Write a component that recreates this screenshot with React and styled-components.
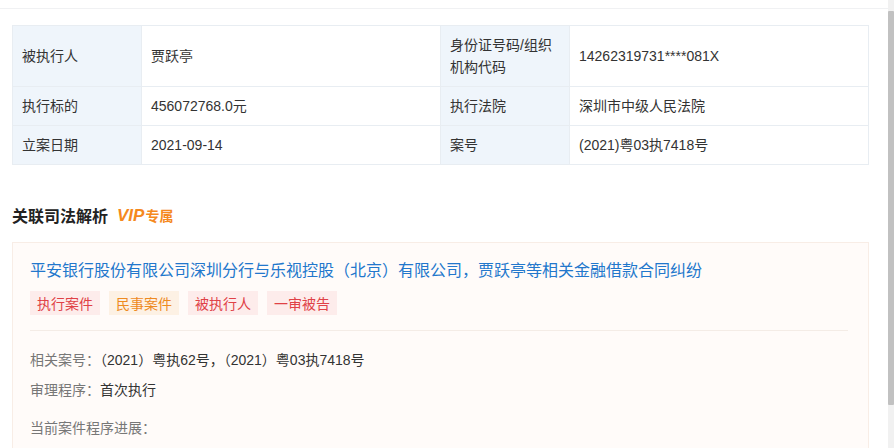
import React from "react";
import styled, { createGlobalStyle } from "styled-components";

const Global = createGlobalStyle`
  html, body { margin: 0; padding: 0; background: #fff; }
  body { font-family: "Liberation Sans", "Noto Sans CJK SC", sans-serif; color: #333; }
`;

const Page = styled.div`
  display: flex;
  width: 894px;
  height: 448px;
  overflow: hidden;
`;

const Main = styled.div`
  flex: 1;
  display: flex;
  flex-direction: column;
  min-width: 0;
`;

const TopStrip = styled.div`
  height: 8px;
  border-bottom: 1px solid #f0f1f3;
  flex-shrink: 0;
`;

const Content = styled.div`
  padding: 16px 19px 0 12px;
`;

const Table = styled.div`
  display: grid;
  grid-template-columns: 129px 299px 129px 1fr;
  border-top: 1px solid #e8edf2;
  border-left: 1px solid #e8edf2;
`;

const Cell = styled.div`
  display: flex;
  align-items: center;
  padding: 8px 9px;
  min-height: 22px;
  font-size: 14px;
  line-height: 22px;
  color: #333;
  border-right: 1px solid #e8edf2;
  border-bottom: 1px solid #e8edf2;
  background: ${(p) => (p.$label ? "#eff5fb" : "#fff")};
`;

const SectionTitle = styled.div`
  display: flex;
  align-items: center;
  gap: 9px;
  margin-top: 39px;
  height: 22px;
  font-size: 16px;
  font-weight: 700;
  color: #222;
`;

const Vip = styled.span`
  color: #f5891e;
  font-weight: 700;
  font-size: 14px;
  display: inline-flex;
  align-items: baseline;
  gap: 1px;
`;

const VipLatin = styled.span`
  font-style: italic;
  font-weight: 900;
  font-family: "Liberation Sans", sans-serif;
  font-size: 17px;
`;

const Card = styled.div`
  margin-top: 16px;
  background: #fffbf9;
  border: 1px solid #f8ede6;
  padding: 16px 20px 20px 17px;
`;

const CaseTitle = styled.div`
  font-size: 16px;
  line-height: 24px;
  color: #2277cc;
`;

const Tags = styled.div`
  display: flex;
  gap: 9px;
  margin-top: 8px;
  padding-bottom: 15px;
  border-bottom: 1px solid #f4ece6;
`;

const Tag = styled.span`
  display: inline-flex;
  align-items: center;
  height: 24px;
  padding: 0 7px;
  font-size: 14px;
  color: ${(p) => (p.$tone === "orange" ? "#ee8a1f" : "#e04146")};
  background: ${(p) => (p.$tone === "orange" ? "#fdf1e4" : "#fdeceb")};
`;

const InfoList = styled.div`
  display: flex;
  flex-direction: column;
  padding-top: 19px;
`;

const InfoRow = styled.div`
  font-size: 14px;
  line-height: 20px;
  margin-top: ${(p) => p.$gap || 0}px;
  color: #333;
`;

const InfoLabel = styled.span`
  color: #777;
`;

const Scrollbar = styled.div`
  width: 6px;
  flex-shrink: 0;
  background: #f1f1f1;
  display: flex;
  flex-direction: column;
  padding-top: 11px;
`;

const Thumb = styled.div`
  height: 394px;
  background: #c1c1c1;
  border-radius: 1px;
`;

const rows = [
  ["被执行人", "贾跃亭", "身份证号码/组织机构代码", "14262319731****081X"],
  ["执行标的", "456072768.0元", "执行法院", "深圳市中级人民法院"],
  ["立案日期", "2021-09-14", "案号", "(2021)粤03执7418号"],
];

const tags = [
  ["执行案件", "red"],
  ["民事案件", "orange"],
  ["被执行人", "red"],
  ["一审被告", "red"],
];

export default function App() {
  return (
    <>
      <Global />
      <Page>
        <Main>
          <TopStrip />
          <Content>
            <Table>
              {rows.map((r, i) => (
                <React.Fragment key={i}>
                  <Cell $label>{r[0]}</Cell>
                  <Cell>{r[1]}</Cell>
                  <Cell $label>{r[2]}</Cell>
                  <Cell>{r[3]}</Cell>
                </React.Fragment>
              ))}
            </Table>
            <SectionTitle>
              关联司法解析
              <Vip>
                <VipLatin>VIP</VipLatin>专属
              </Vip>
            </SectionTitle>
            <Card>
              <CaseTitle>
                平安银行股份有限公司深圳分行与乐视控股（北京）有限公司，贾跃亭等相关金融借款合同纠纷
              </CaseTitle>
              <Tags>
                {tags.map(([t, tone]) => (
                  <Tag key={t} $tone={tone}>
                    {t}
                  </Tag>
                ))}
              </Tags>
              <InfoList>
                <InfoRow>
                  <InfoLabel>相关案号：</InfoLabel>（2021）粤执62号，（2021）粤03执7418号
                </InfoRow>
                <InfoRow $gap={10}>
                  <InfoLabel>审理程序：</InfoLabel>首次执行
                </InfoRow>
                <InfoRow $gap={18}>
                  <InfoLabel>当前案件程序进展：</InfoLabel>
                </InfoRow>
              </InfoList>
            </Card>
          </Content>
        </Main>
        <Scrollbar>
          <Thumb />
        </Scrollbar>
      </Page>
    </>
  );
}
